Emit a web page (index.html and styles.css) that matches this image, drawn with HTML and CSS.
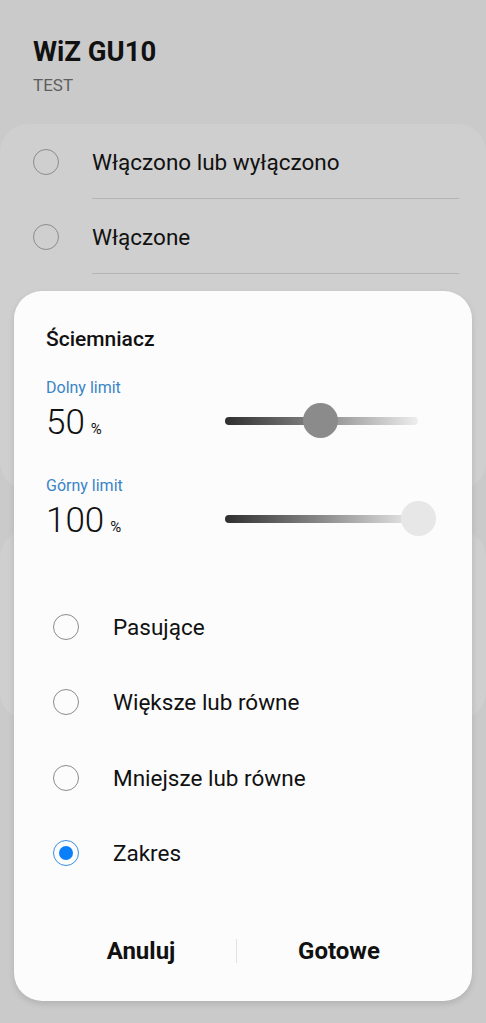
FILE: index.html
```html
<!DOCTYPE html>
<html lang="pl">
<head>
    <meta charset="UTF-8">
    <meta name="viewport" content="width=device-width, initial-scale=1.0">
    <title>WiZ GU10</title>
    <link rel="stylesheet" href="styles.css">
</head>
<body>

<div class="page">
    <header class="page-header">
        <h1>WiZ GU10</h1>
        <div class="subtitle">TEST</div>
    </header>

    <div class="card">
        <div class="row">
            <span class="radio"></span>
            <span class="row-label">Włączono lub wyłączono</span>
        </div>
        <div class="row">
            <span class="radio"></span>
            <span class="row-label">Włączone</span>
        </div>
    </div>

    <div class="card card-second"></div>
</div>

<div class="dialog">
    <h2>Ściemniacz</h2>

    <div class="limit">
        <div class="limit-info">
            <div class="limit-label">Dolny limit</div>
            <div class="limit-value">50<span class="unit">%</span></div>
        </div>
        <div class="slider">
            <div class="track"></div>
            <div class="thumb" style="left: 49%"></div>
        </div>
    </div>

    <div class="limit">
        <div class="limit-info">
            <div class="limit-label">Górny limit</div>
            <div class="limit-value">100<span class="unit">%</span></div>
        </div>
        <div class="slider">
            <div class="track"></div>
            <div class="thumb thumb-light" style="left: 100%"></div>
        </div>
    </div>

    <div class="options">
        <div class="option"><span class="radio"></span>Pasujące</div>
        <div class="option"><span class="radio"></span>Większe lub równe</div>
        <div class="option"><span class="radio"></span>Mniejsze lub równe</div>
        <div class="option"><span class="radio checked"></span>Zakres</div>
    </div>

    <div class="actions">
        <button class="action-btn btn-cancel">Anuluj</button>
        <span class="action-sep"></span>
        <button class="action-btn btn-done">Gotowe</button>
    </div>
</div>

</body>
</html>
```

FILE: styles.css
```css
body {
    background-color: #cacaca;
    font-family: Roboto, "Noto Sans", sans-serif;
    margin: 0;
    color: #111;
}

.page {
    width: 486px;
    height: 1023px;
    overflow: hidden;
}

.page-header {
    padding: 36px 33px 0;
    box-sizing: border-box;
    height: 124px;
}

h1 {
    margin: 0;
    font-size: 27.5px;
    font-weight: 700;
    line-height: 32px;
}

.subtitle {
    font-size: 17px;
    color: #5e5e5e;
    line-height: 20px;
    margin-top: 7px;
}

.card {
    background-color: #cfcfcf;
    border-radius: 28px;
    height: 366px;
}

.card-second {
    margin-top: 40px;
    height: 190px;
}

.row {
    display: flex;
    align-items: center;
    height: 75px;
    position: relative;
}

.row::after {
    content: "";
    position: absolute;
    left: 92px;
    right: 27px;
    bottom: 0;
    border-bottom: 1px solid #b5b5b5;
}

.row .radio {
    margin-left: 33px;
}

.row-label {
    margin-left: 33px;
    font-size: 22.5px;
}

.radio {
    width: 24px;
    height: 24px;
    border: 1.5px solid #8c8c8c;
    border-radius: 50%;
    flex-shrink: 0;
    box-sizing: content-box;
    position: relative;
}

.radio.checked {
    border-color: #3b8fe0;
}

.radio.checked::after {
    content: "";
    position: absolute;
    left: 5px;
    top: 5px;
    width: 14px;
    height: 14px;
    border-radius: 50%;
    background-color: #0a7ff7;
}

.dialog {
    position: absolute;
    left: 14px;
    top: 291px;
    width: 458px;
    height: 710px;
    box-sizing: border-box;
    background-color: #fcfcfc;
    border-radius: 28px;
    box-shadow: 0px 3px 6px rgba(0, 0, 0, 0.12);
    padding: 36px 0 0 32px;
    display: flex;
    flex-direction: column;
}

h2 {
    margin: 0;
    font-size: 21px;
    font-weight: 500;
    line-height: 24px;
}

.limit {
    display: flex;
    align-items: flex-end;
    margin-top: 27px;
}

.limit + .limit {
    margin-top: 25px;
}

.limit-info {
    width: 179px;
}

.limit-label {
    font-size: 16px;
    color: #3a84c6;
    line-height: 20px;
}

.limit-value {
    font-size: 35px;
    font-weight: 300;
    line-height: 44px;
    margin-top: 3px;
}

.unit {
    font-size: 15px;
    font-weight: 400;
    margin-left: 6px;
}

.slider {
    position: relative;
    width: 193px;
    height: 36px;
    margin-bottom: 12px;
}

.track {
    position: absolute;
    left: 0;
    right: 0;
    top: 14px;
    height: 8px;
    border-radius: 4px;
    background: linear-gradient(to right, #2f2f2f, #8a8a8a 50%, #eeeeee);
}

.thumb {
    position: absolute;
    top: 0;
    width: 35px;
    height: 35px;
    margin-left: -17px;
    border-radius: 50%;
    background-color: #8b8b8b;
}

.thumb-light {
    background-color: #e7e7e7;
}

.options {
    margin-top: 40px;
    margin-left: 7px;
}

.option {
    display: flex;
    align-items: center;
    height: 75.5px;
    font-size: 22.5px;
}

.option .radio {
    margin-right: 34px;
}

.actions {
    display: flex;
    align-items: center;
    margin-top: 40px;
    height: 40px;
}

.action-btn {
    background: none;
    border: none;
    font-family: inherit;
    font-size: 24px;
    font-weight: 700;
    color: #111;
    padding: 0;
    cursor: pointer;
}

.btn-cancel {
    width: 190px;
}

.btn-done {
    width: 204px;
}

.action-sep {
    width: 1px;
    height: 24px;
    background-color: #e2e2e2;
}
```
